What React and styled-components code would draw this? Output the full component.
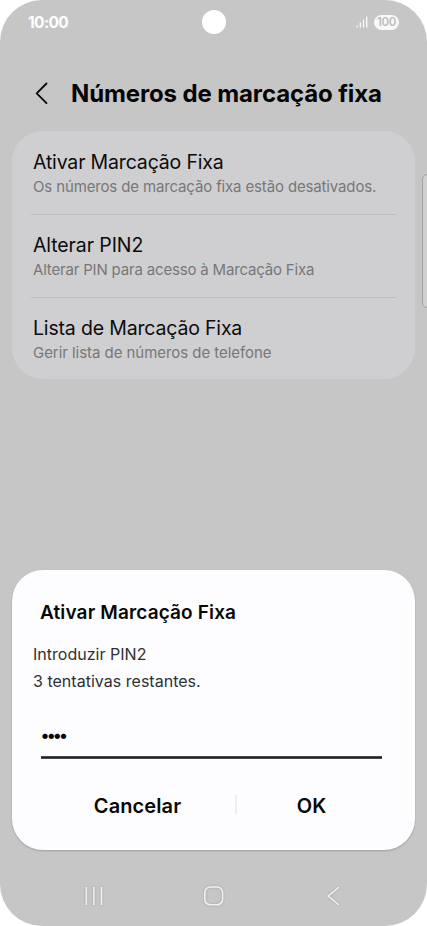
import { useState } from "react";
import styled, { createGlobalStyle } from "styled-components";

const FONT = `Inter, "Liberation Sans", sans-serif`;

const GlobalStyle = createGlobalStyle`
  * {
    box-sizing: border-box;
  }

  body {
    margin: 0;
    background: #ffffff;
    font-family: ${FONT};
  }
`;

const Screen = styled.div`
  position: relative;
  display: flex;
  flex-direction: column;
  width: 427px;
  height: 926px;
  overflow: hidden;
  border-radius: 42px;
  background: #c6c6c6;
`;

const StatusBar = styled.div`
  display: grid;
  grid-template-columns: 1fr 24px 1fr;
  align-items: center;
  height: 44px;
  padding: 0 28px;
  color: #ffffff;
`;

const Clock = styled.span`
  font-size: 15.5px;
  font-weight: 700;
  letter-spacing: -0.6px;
`;

const Camera = styled.div`
  width: 24px;
  height: 24px;
  border-radius: 50%;
  background: #ffffff;
`;

const StatusIcons = styled.div`
  display: flex;
  justify-content: flex-end;
  align-items: center;
  gap: 6px;
`;

const Battery = styled.span`
  width: 25px;
  height: 15px;
  border-radius: 8px;
  background: #f8f8f8;
  color: #bcbcbc;
  font-size: 11.5px;
  font-weight: 600;
  line-height: 15px;
  text-align: center;
  letter-spacing: -0.4px;
`;

const Header = styled.header`
  display: flex;
  align-items: center;
  height: 87px;
  padding: 12px 34px 0;
`;

const BackButton = styled.button`
  display: flex;
  width: 37px;
  padding: 0;
  border: none;
  background: none;
`;

const Title = styled.h1`
  margin: 1px 0 0;
  color: #050505;
  font-size: 24px;
  font-weight: 700;
  line-height: 32px;
  letter-spacing: -0.12px;
  white-space: nowrap;
`;

const List = styled.ul`
  display: flex;
  flex-direction: column;
  height: 248px;
  margin: 0 12px;
  padding: 0 19px;
  border-radius: 31px;
  background: #cfcfd1;
  list-style: none;
`;

const Row = styled.li`
  flex: none;
  height: 83px;
  padding: 19px 2px 0;
  white-space: nowrap;

  & + & {
    padding-top: 18px;
    border-top: 1px solid #bdbdbf;
  }

  &:last-child {
    height: 82px;
  }
`;

const RowTitle = styled.div`
  color: #0b0b0b;
  font-size: 19.5px;
  line-height: 24px;
  letter-spacing: ${({ $spacing }) => $spacing || 0}px;
`;

const RowText = styled.div`
  margin-top: 1px;
  color: #777779;
  font-size: 15px;
  line-height: 24px;
  letter-spacing: ${({ $spacing }) => $spacing || 0}px;
`;

const EdgeHandle = styled.div`
  position: absolute;
  top: 174px;
  right: -8px;
  width: 13px;
  height: 134px;
  border: 1px solid #a2a2a2;
  border-radius: 5px;
  background: #d0d0d1;
`;

const Dialog = styled.section`
  display: flex;
  flex-direction: column;
  height: 280px;
  margin: 191px 12px 0;
  border-radius: 31px;
  background: #fdfdff;
  box-shadow: 0 1px 2px rgba(0, 0, 0, 0.2);
`;

const DialogTitle = styled.h2`
  margin: 30px 0 0 28px;
  color: #080808;
  font-size: 19px;
  font-weight: 600;
  line-height: 26px;
  letter-spacing: 0.14px;
`;

const Message = styled.p`
  margin: ${({ $top }) => $top || 0}px 0 0 21px;
  color: #303032;
  font-size: 16px;
  line-height: 27px;
  letter-spacing: 0.02px;
`;

const PinField = styled.div`
  height: 46px;
  margin: 18px 33px 0 29px;
  padding-top: 12px;
  background: linear-gradient(#5c5c5e, #222224, #5c5c5e) bottom / 100% 3px no-repeat;
  color: #050505;
  font-size: 17px;
  font-weight: 700;
  line-height: 20px;
  letter-spacing: -1.9px;
`;

const Actions = styled.div`
  display: grid;
  grid-template-columns: 195px 2px 149px;
  align-items: center;
  height: 40px;
  margin: 26px 0 0 28px;
`;

const Separator = styled.span`
  height: 19px;
  margin-bottom: 1px;
  background: #efeff1;
`;

const Action = styled.button`
  padding: 1px 0 0;
  border: none;
  background: none;
  color: #080808;
  font-family: inherit;
  font-size: 20px;
  font-weight: 600;
  line-height: 30px;
  letter-spacing: 0.1px;
`;

const NavBar = styled.nav`
  display: grid;
  grid-template-columns: repeat(3, 120px);
  justify-content: center;
  justify-items: center;
  align-items: center;
  height: 76px;
  padding-top: 16px;

  svg {
    filter: drop-shadow(0 0 1px rgba(0, 0, 0, 0.2));
  }
`;

const rows = [
  {
    title: "Ativar Marcação Fixa",
    titleSpacing: -0.17,
    text: "Os números de marcação fixa estão desativados.",
    textSpacing: -0.14,
  },
  {
    title: "Alterar PIN2",
    titleSpacing: -0.1,
    text: "Alterar PIN para acesso à Marcação Fixa",
    textSpacing: -0.18,
  },
  {
    title: "Lista de Marcação Fixa",
    titleSpacing: -0.17,
    text: "Gerir lista de números de telefone",
    textSpacing: -0.05,
  },
];

function SignalIcon() {
  return (
    <svg width="12" height="12" viewBox="0 0 12 12" fill="#fafafa">
      <rect x="0.5" y="9.5" width="1.3" height="2" />
      <rect x="3.7" y="6.5" width="1.3" height="5" />
      <rect x="6.9" y="3.5" width="1.3" height="8" />
      <rect x="10.1" y="0.5" width="1.3" height="11" />
    </svg>
  );
}

function ChevronIcon() {
  return (
    <svg width="16" height="24" viewBox="0 0 16 24" fill="none">
      <path
        d="M12.5 1.5 L2.7 11.3 L12.5 21.1"
        stroke="#080808"
        strokeWidth="1.8"
        strokeLinecap="round"
        strokeLinejoin="round"
      />
    </svg>
  );
}

function NavIcon({ children }) {
  return (
    <svg width="24" height="24" viewBox="0 0 24 24" fill="none" stroke="#f0f0f0" strokeWidth="1.6">
      {children}
    </svg>
  );
}

export default function App() {
  const [pin] = useState("1234");

  return (
    <>
      <GlobalStyle />
      <Screen>
        <StatusBar>
          <Clock>10:00</Clock>
          <Camera />
          <StatusIcons>
            <SignalIcon />
            <Battery>100</Battery>
          </StatusIcons>
        </StatusBar>
        <Header>
          <BackButton aria-label="Voltar">
            <ChevronIcon />
          </BackButton>
          <Title>Números de marcação fixa</Title>
        </Header>
        <List>
          {rows.map((row) => (
            <Row key={row.title}>
              <RowTitle $spacing={row.titleSpacing}>{row.title}</RowTitle>
              <RowText $spacing={row.textSpacing}>{row.text}</RowText>
            </Row>
          ))}
        </List>
        <EdgeHandle />
        <Dialog>
          <DialogTitle>Ativar Marcação Fixa</DialogTitle>
          <Message $top={15}>Introduzir PIN2</Message>
          <Message>3 tentativas restantes.</Message>
          <PinField>{"•".repeat(pin.length)}</PinField>
          <Actions>
            <Action>Cancelar</Action>
            <Separator />
            <Action>OK</Action>
          </Actions>
        </Dialog>
        <NavBar>
          <NavIcon>
            <path d="M4.3 3v18M11.9 3v18M19.5 3v18" />
          </NavIcon>
          <NavIcon>
            <rect x="2.8" y="3" width="17.8" height="17.8" rx="5.5" />
          </NavIcon>
          <NavIcon>
            <path d="M17 3.2 L6.3 12 L17 21" />
          </NavIcon>
        </NavBar>
      </Screen>
    </>
  );
}
